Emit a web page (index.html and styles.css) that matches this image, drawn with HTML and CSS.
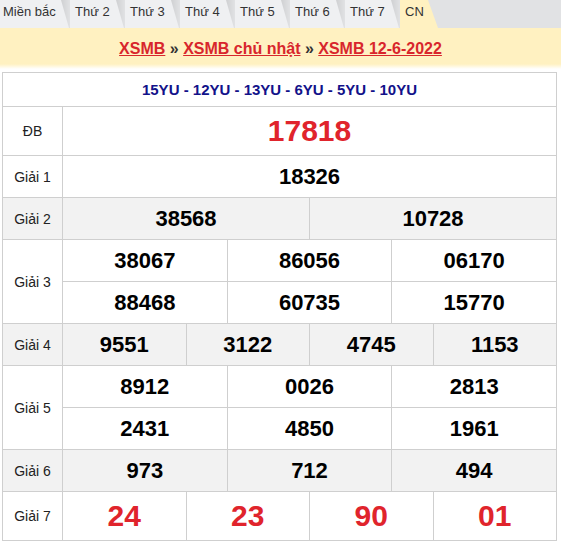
FILE: index.html
```html
<!DOCTYPE html>
<html lang="vi">
<head>
<meta charset="utf-8">
<title>XSMB 12-6-2022</title>
<link rel="stylesheet" href="styles.css">
</head>
<body>
<nav class="tabs">
  <a class="tab tab-first" href="#">Miền bắc</a>
  <a class="tab" href="#">Thứ 2</a>
  <a class="tab" href="#">Thứ 3</a>
  <a class="tab" href="#">Thứ 4</a>
  <a class="tab" href="#">Thứ 5</a>
  <a class="tab" href="#">Thứ 6</a>
  <a class="tab" href="#">Thứ 7</a>
  <a class="tab tab-active" href="#">CN</a>
</nav>
<div class="crumbs">
  <a href="#">XSMB</a> » <a href="#">XSMB chủ nhật</a> » <a href="#">XSMB 12-6-2022</a>
</div>
<div class="results">
  <div class="cell codes">15YU - 12YU - 13YU - 6YU - 5YU - 10YU</div>

  <div class="cell label">ĐB</div>
  <div class="cell num big red s12">17818</div>

  <div class="cell label">Giải 1</div>
  <div class="cell num s12">18326</div>

  <div class="cell label gray">Giải 2</div>
  <div class="cell num gray s6">38568</div>
  <div class="cell num gray s6">10728</div>

  <div class="cell label r2">Giải 3</div>
  <div class="cell num s4">38067</div>
  <div class="cell num s4">86056</div>
  <div class="cell num s4">06170</div>
  <div class="cell num s4">88468</div>
  <div class="cell num s4">60735</div>
  <div class="cell num s4">15770</div>

  <div class="cell label gray">Giải 4</div>
  <div class="cell num gray s3">9551</div>
  <div class="cell num gray s3">3122</div>
  <div class="cell num gray s3">4745</div>
  <div class="cell num gray s3">1153</div>

  <div class="cell label r2">Giải 5</div>
  <div class="cell num s4">8912</div>
  <div class="cell num s4">0026</div>
  <div class="cell num s4">2813</div>
  <div class="cell num s4">2431</div>
  <div class="cell num s4">4850</div>
  <div class="cell num s4">1961</div>

  <div class="cell label gray">Giải 6</div>
  <div class="cell num gray s4">973</div>
  <div class="cell num gray s4">712</div>
  <div class="cell num gray s4">494</div>

  <div class="cell label">Giải 7</div>
  <div class="cell num big red s3">24</div>
  <div class="cell num big red s3">23</div>
  <div class="cell num big red s3">90</div>
  <div class="cell num big red s3">01</div>
</div>
</body>
</html>
```
FILE: styles.css
```css
* { box-sizing: border-box; }

html, body {
  margin: 0;
  padding: 0;
  background: #fff;
  font-family: "Liberation Sans", Arial, sans-serif;
}

.tabs {
  display: flex;
  height: 28px;
  background: #e1e2e4;
}

.tab {
  position: relative;
  z-index: 0;
  display: block;
  width: 55px;
  height: 28px;
  padding-left: 5px;
  line-height: 24px;
  font-size: 13px;
  color: #333;
  text-decoration: none;
  white-space: nowrap;
  background: linear-gradient(to right, #e1e2e4 0, #e1e2e4 calc(100% - 10px), #cdced0 calc(100% - 10px), #e1e2e4 100%);
}

.tab::before {
  content: "";
  position: absolute;
  inset: 0;
  z-index: -1;
  background: #eff0f2;
  clip-path: polygon(0 0, calc(100% - 9px) 0, calc(100% - 1px) 100%, 0 100%);
}

.tab-first {
  width: 70px;
  padding-left: 3px;
}

.tab-active {
  width: 40px;
  background: #e1e2e4;
}

.tab-active::before {
  background: #fff1c1;
  clip-path: polygon(0 0, 28px 0, 38px 100%, 0 100%);
}

.crumbs {
  height: 41px;
  padding-top: 3px;
  line-height: 36px;
  text-align: center;
  font-size: 16px;
  font-weight: bold;
  color: #333;
  background: linear-gradient(to bottom, #fff1c1 0, #fff1c1 36px, #ffffff 41px);
}

.crumbs a {
  color: #d8262c;
  text-decoration: underline;
}

.results {
  display: grid;
  grid-template-columns: 59px repeat(12, 1fr);
  grid-template-rows: 33px 48px repeat(8, 41px) 48px;
  gap: 1px;
  padding: 1px;
  width: 555px;
  margin: 3px 0 0 2px;
  background: #cfcfcf;
}

.cell {
  display: flex;
  align-items: center;
  justify-content: center;
  background: #fff;
}

.gray { background: #f2f2f2; }

.codes {
  grid-column: 1 / -1;
  font-size: 15px;
  font-weight: bold;
  color: #12128a;
}

.label {
  font-size: 14px;
  color: #222;
}

.r2 { grid-row: span 2; }

.num {
  font-size: 22px;
  font-weight: bold;
  color: #000;
}

.big { font-size: 30px; }
.red { color: #e0242c; }

.s12 { grid-column: span 12; }
.s6 { grid-column: span 6; }
.s4 { grid-column: span 4; }
.s3 { grid-column: span 3; }
```
